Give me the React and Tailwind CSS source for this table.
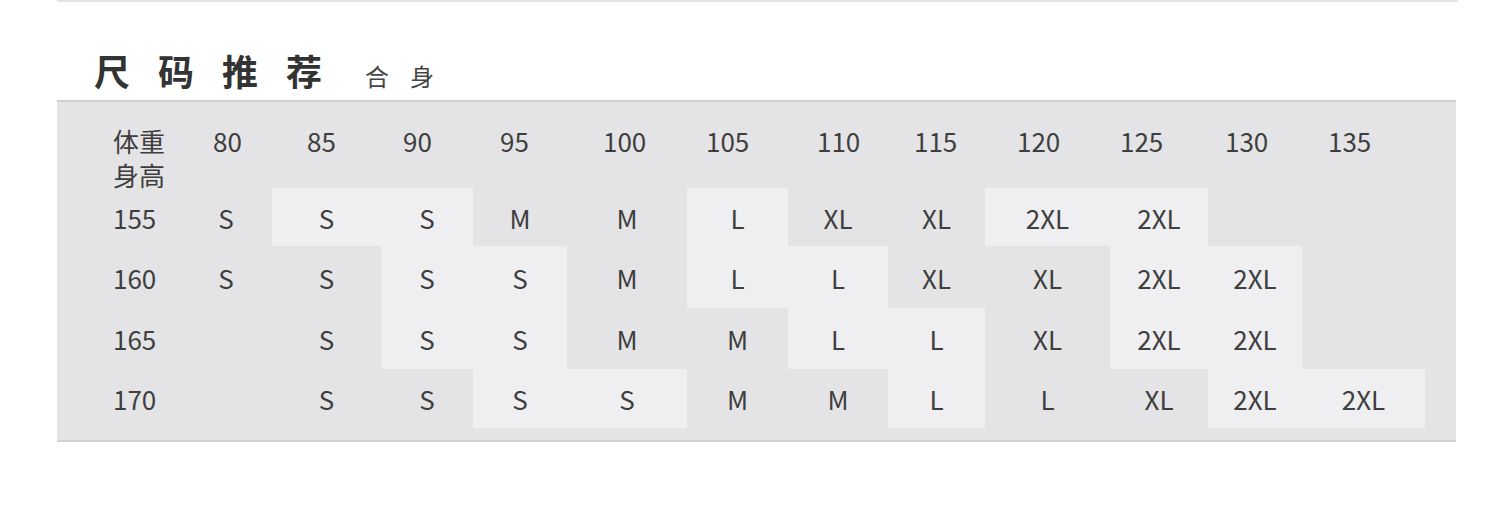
import React from "react";

const FONT = { fontFamily: '"Noto Sans CJK SC", "Noto Sans", sans-serif' };

const headerCells = [
  { t: "80", w: "w-[94px]" },
  { t: "85", w: "w-[96px]" },
  { t: "90", w: "w-[97px]" },
  { t: "95", w: "w-[103px]" },
  { t: "100", w: "w-[103px]" },
  { t: "105", w: "w-[111px]" },
  { t: "110", w: "w-[97px]" },
  { t: "115", w: "w-[103px]" },
  { t: "120", w: "w-[103px]" },
  { t: "125", w: "w-[105px]" },
  { t: "130", w: "w-[103px]" },
  { t: "135", w: "w-[100px]" },
];

// [text, light?]
const rows = [
  {
    h: "h-[58px]",
    label: "155",
    cells: [
      ["S", 0], ["S", 1], ["S", 1], ["M", 0], ["M", 0], ["L", 1],
      ["XL", 0], ["XL", 0], ["2XL", 1], ["2XL", 1], ["", 0], ["", 0],
    ],
  },
  {
    h: "h-[62px]",
    label: "160",
    cells: [
      ["S", 0], ["S", 0], ["S", 1], ["S", 1], ["M", 0], ["L", 1],
      ["L", 1], ["XL", 0], ["XL", 0], ["2XL", 1], ["2XL", 1], ["", 0],
    ],
  },
  {
    h: "h-[61px]",
    label: "165",
    cells: [
      ["", 0], ["S", 0], ["S", 1], ["S", 1], ["M", 0], ["M", 0],
      ["L", 1], ["L", 1], ["XL", 0], ["2XL", 1], ["2XL", 1], ["", 0],
    ],
  },
  {
    h: "h-[59px]",
    label: "170",
    cells: [
      ["", 0], ["S", 0], ["S", 0], ["S", 1], ["S", 1], ["M", 0],
      ["M", 0], ["L", 1], ["L", 0], ["XL", 0], ["2XL", 1], ["2XL", 1],
    ],
  },
];

export default function App() {
  return (
    <div className="w-[1500px] h-[523px] bg-white text-[#3e3e3e]" style={FONT}>
      <div className="ml-[57px] w-[1401px] h-[2px] bg-[#e4e4e4]" />

      <div className="flex items-end pl-[94px] pt-[44px] h-[98px] pb-[6px]">
        <span className="text-[36px] leading-[48px] font-bold tracking-[28px] text-[#333333]">
          尺码推荐
        </span>
        <span className="ml-[15px] mb-[2px] text-[24px] leading-[32px] tracking-[21px] text-[#444444]">
          合身
        </span>
      </div>

      <div className="ml-[57px] w-[1399px] bg-[#e4e4e6] border-t-2 border-b-2 border-t-[#cfcfd1] border-b-[#d2d2d4] pb-[12px]">
        <div className="flex h-[86px] pt-[22px] text-[26px] leading-[34px]">
          <div className="w-[156px] pl-[56px] flex flex-col">
            <span>体重</span>
            <span>身高</span>
          </div>
          {headerCells.map((c) => (
            <div key={c.t} className={c.w}>
              {c.t}
            </div>
          ))}
        </div>

        {rows.map((r) => (
          <div
            key={r.label}
            className={`grid grid-cols-[123px_92px_109px_92px_94px_120px_101px_100px_97px_125px_98px_94px_123px] ${r.h} text-[26px]`}
          >
            <div className="pl-[56px] flex items-center">{r.label}</div>
            {r.cells.map(([t, light], i) => (
              <div
                key={i}
                className={`flex items-center justify-center ${light ? "bg-[#efeff1]" : ""}`}
              >
                {t}
              </div>
            ))}
          </div>
        ))}
      </div>
    </div>
  );
}
